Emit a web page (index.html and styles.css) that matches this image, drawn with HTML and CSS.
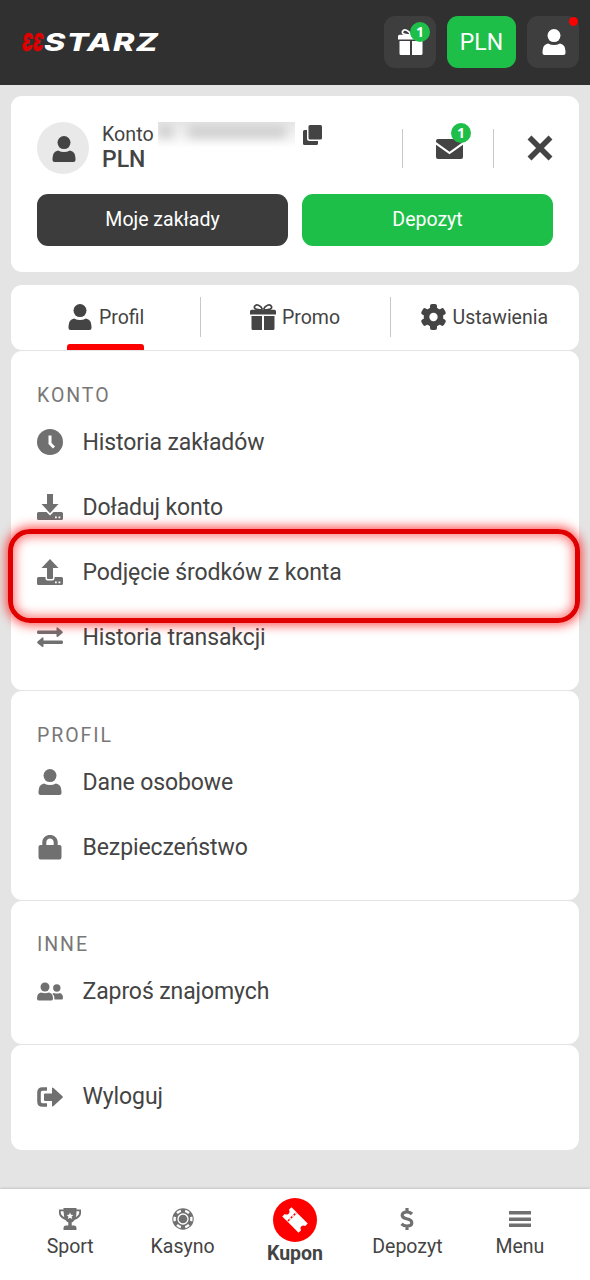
FILE: index.html
```html
<!DOCTYPE html>
<html lang="pl">
<head>
<meta charset="utf-8">
<meta name="viewport" content="width=device-width, initial-scale=1">
<title>Konto</title>
<link rel="stylesheet" href="styles.css">
</head>
<body>
<svg class="defs" aria-hidden="true">
  <symbol id="user" viewBox="0 0 26 26"><circle cx="13" cy="6.6" r="6.5"/><path d="M7 14.400Q10 16 13 16T19 14.400Q24.500 15.500 24.500 22.500V24Q24.500 26 22.500 26H3.500Q1.500 26 1.500 24V22.500Q1.500 15.500 7 14.400Z"/></symbol>
  <symbol id="gift" viewBox="0 0 26 26"><path d="M0 7.500Q0 5.800 1.600 5.800H24.400Q26 5.800 26 7.500V10.500H0ZM1.500 12H12V26H3Q1.500 26 1.500 24.500ZM14 12H24.500V24.500Q24.500 26 23 26H14Z"/><path d="M12.500 6C9 6 3.500 5.500 4.500 2.500C6-.5 11 1 12.500 5.500M13.500 6C17 6 22.500 5.500 21.500 2.500C20-.5 15 1 13.500 5.500" fill="none" stroke="currentColor" stroke-width="1.700"/></symbol>
</svg>

<header class="topbar">
  <svg class="logo" viewBox="0 0 140 24" role="img" aria-label="Starz">
    <text class="logo-mark" x="0" y="20.500" textLength="21.500" lengthAdjust="spacingAndGlyphs">ƐƐ</text>
    <text class="logo-word" x="22" y="20.500" textLength="115" lengthAdjust="spacingAndGlyphs">STARZ</text>
  </svg>
  <div class="topbar-actions">
    <button class="square"><svg class="i26"><use href="#gift"/></svg><span class="badge badge-gift">1</span></button>
    <button class="currency">PLN</button>
    <button class="square"><svg class="i26"><use href="#user"/></svg><span class="dot"></span></button>
  </div>
</header>

<main class="content">
  <section class="card account">
    <div class="account-head">
      <span class="avatar"><svg class="i26"><use href="#user"/></svg></span>
      <div class="account-info">
        <div class="account-line"><span>Konto</span><span class="masked"><span class="smudge s1"></span><span class="smudge s2"></span></span>
          <svg class="copy" viewBox="0 0 19 20"><path d="M1.500 5H4V13.500Q4 16 6.500 16H15V18.500Q15 20 13.500 20H1.500Q0 20 0 18.500V6.500Q0 5 1.500 5Z"/><rect x="5.500" y="0" width="13.500" height="14.500" rx="1.500"/></svg>
        </div>
        <strong class="account-currency">PLN</strong>
      </div>
      <div class="mail">
        <svg class="mail-icon" viewBox="0 0 27 20"><path d="M2 0H25Q27 0 27 2V3L13.500 12.800L0 3V2Q0 0 2 0ZM0 5.800L13.500 15.300L27 5.800V18Q27 20 25 20H2Q0 20 0 18Z"/></svg>
        <span class="badge badge-mail">1</span>
      </div>
      <svg class="close" viewBox="0 0 26 26"><path d="M2.500 2.500L23.500 23.500M23.500 2.500L2.500 23.500"/></svg>
    </div>
    <div class="account-buttons">
      <button class="btn btn-dark">Moje zakłady</button>
      <button class="btn btn-green">Depozyt</button>
    </div>
  </section>

  <nav class="card tabs">
    <a class="tab tab-active"><span class="tab-body"><svg class="i26"><use href="#user"/></svg>Profil</span></a>
    <a class="tab"><span class="tab-body"><svg class="i26"><use href="#gift"/></svg>Promo</span></a>
    <a class="tab"><span class="tab-body"><svg class="i26" viewBox="0.500 0 26 26"><rect x="9.500" y="0" width="7" height="26" rx="2"/><rect x="9.500" y="0" width="7" height="26" rx="2" transform="rotate(60 13 13)"/><rect x="9.500" y="0" width="7" height="26" rx="2" transform="rotate(120 13 13)"/><circle cx="13" cy="13" r="9.800"/><circle class="hole" cx="13" cy="13" r="4.200"/></svg>Ustawienia</span></a>
  </nav>

  <section class="card group">
    <h2 class="group-title">KONTO</h2>
    <a class="row"><svg class="i26" viewBox="0 0 26 26"><circle cx="13" cy="13" r="13"/><path class="clock-hand" d="M13 6.500V14.500L17 18.500"/></svg>Historia zakładów</a>
    <a class="row"><svg class="i26" viewBox="0 0 26 26"><path d="M10 0H16V10H21.500L13 19.200L4.500 10H10Z"/><path d="M1.500 18H9.500L13 21.500L16.500 18H24.500Q26 18 26 19.500V24.500Q26 26 24.500 26H1.500Q0 26 0 24.500V19.500Q0 18 1.500 18Z"/><path class="hole" d="M18 22.500h1.800v1.800H18zM21.500 22.500h1.800v1.800h-1.800z"/></svg>Doładuj konto</a>
    <a class="row row-marked"><svg class="i26" viewBox="0 0 26 26"><path d="M13 0L21.500 9H16V19Q16 20 15 20H11Q10 20 10 19V9H4.500Z"/><path d="M1.500 18H8.500V19.500Q8.500 21.500 10.500 21.500H15.500Q17.500 21.500 17.500 19.500V18H24.500Q26 18 26 19.500V24.500Q26 26 24.500 26H1.500Q0 26 0 24.500V19.500Q0 18 1.500 18Z"/><path class="hole" d="M18 22.500h1.800v1.800H18zM21.500 22.500h1.800v1.800h-1.800z"/></svg>Podjęcie środków z konta</a>
    <a class="row"><svg class="i26" viewBox="0 0 26 26"><path d="M1 6.500H19.500V4.200Q19.500 2.600 21 3.700L25.500 7.400Q26.300 8.200 25.500 9L21 12.700Q19.500 13.500 19.500 12V10H1Q0 10 0 8.300Q0 6.500 1 6.500ZM25 16.500H6.500V14.500Q6.500 12.700 5 13.700L.5 17.500Q-.3 18.400.5 19.200L5 22.800Q6.500 23.600 6.500 22V20H25Q26 20 26 18.300Q26 16.500 25 16.500Z"/></svg>Historia transakcji</a>
  </section>

  <section class="card group group-short">
    <h2 class="group-title">PROFIL</h2>
    <a class="row"><svg class="i26"><use href="#user"/></svg>Dane osobowe</a>
    <a class="row"><svg class="i26" viewBox="0 0 26 26"><path d="M5.300 11V8.500C5.300-1.500 20.700-1.500 20.700 8.500V11H22.500Q24.500 11 24.500 13V23Q24.500 25.500 22.500 25.500H3.500Q1.500 25.500 1.500 23V13Q1.500 11 3.500 11ZM9.300 11H16.700V8.500C16.700 3.300 9.300 3.300 9.300 8.500Z"/></svg>Bezpieczeństwo</a>
  </section>

  <section class="card group group-short">
    <h2 class="group-title">INNE</h2>
    <a class="row"><svg class="i26" viewBox="0 0.500 26 26"><circle cx="8" cy="8.500" r="4.500"/><circle cx="19.800" cy="9.500" r="3.700"/><path d="M4 14Q8 15.500 12 14Q16 14.700 16 20Q16 22 14.500 22H1.500Q0 22 0 20Q0 14.700 4 14ZM16.500 14.500Q20 15.500 23 14.500Q26 15.500 26 19.500Q26 21 24.500 21H17.500Q17.800 17 15.500 15.300Z"/></svg>Zaproś znajomych</a>
  </section>

  <section class="card logout">
    <a class="row"><svg class="i26" viewBox="0 0 26 26"><path d="M10 5H5.500Q2 5 2 8.500V17.500Q2 21 5.500 21H10" fill="none" stroke="currentColor" stroke-width="3.600"/><path d="M8 9.500H15V4.500Q15 2.700 16.500 4L25.500 12.200Q26.300 13 25.500 13.800L16.500 22Q15 23.300 15 21.500V17H8Q7 17 7 16V10.500Q7 9.500 8 9.500Z"/></svg>Wyloguj</a>
  </section>
</main>

<nav class="bottom">
  <a class="item"><svg class="i22" viewBox="0 0 22 22"><path d="M4.500 0H17.500V1.500H22V5C22 8.500 18.500 11 15.500 12Q14 14 12.700 14.500V17.500H15.500Q17.500 17.500 17.500 20V22H4.500V20Q4.500 17.500 6.500 17.500H9.300V14.500Q8 14 6.500 12C3.500 11 0 8.500 0 5V1.500H4.500ZM4.500 3.300H1.800V5Q2 7.500 5.200 9.300ZM17.500 3.300Q17.500 7 16.800 9.300Q20 7.500 20.200 5V3.300Z" fill-rule="evenodd"/><path class="hole" d="M11 4.500l1 2.200 2.400.3-1.800 1.600.6 2.400L11 9.800l-2.200 1.200.6-2.400L7.600 7l2.400-.3z"/></svg><span>Sport</span></a>
  <a class="item"><svg class="i22" viewBox="0 0 22 22"><circle cx="11" cy="11" r="10.700"/><g class="chip-lines"><circle cx="11" cy="11" r="5"/><circle class="chip-dash" cx="11" cy="11" r="8.400" pathLength="48"/></g></svg><span>Kasyno</span></a>
  <a class="item item-active"><span class="coupon"><svg class="coupon-icon" viewBox="0 0 26 26"><g transform="rotate(45 13 13)"><path d="M1.500 6.500H8V19.500H1.500V16Q4 15.500 4 13Q4 10.500 1.500 10ZM9.500 6.500H24.500V10Q22 10.500 22 13Q22 15.500 24.500 16V19.500H9.500Z"/><path class="perf" d="M8.750 6.500V19.500"/></g></svg></span><span>Kupon</span></a>
  <a class="item"><svg class="i22" viewBox="0 0 22 22"><path class="dollar" d="M11 0V4M11 18V22M16 6Q14 4 11 4Q6.200 4 6.200 7.300Q6.200 9.800 10.500 10.700Q15.800 11.700 15.800 14.700Q15.800 18 11 18Q7.700 18 5.500 15.800"/></svg><span>Depozyt</span></a>
  <a class="item"><svg class="i22" viewBox="0 0 22 22"><path d="M0 3h22v3.500H0zM0 9.500h22V13H0zM0 15.500h22V19H0z"/></svg><span>Menu</span></a>
</nav>
</body>
</html>
```

FILE: styles.css
```css
*, *::before, *::after { box-sizing: border-box; }
body { margin: 0; width: 590px; height: 1280px; display: flex; flex-direction: column; overflow: hidden; background: #e4e4e4; color: #444; font-family: Roboto, "Liberation Sans", sans-serif; }
svg { display: block; flex: none; fill: currentColor; overflow: visible; }
button { border: 0; padding: 0; font-family: inherit; color: #fff; }
.defs { position: absolute; width: 0; height: 0; }
.i26 { width: 26px; height: 26px; }
.i22 { width: 22px; height: 22px; }
.hole { fill: #fff; }

.topbar { flex: none; height: 85px; padding: 0 11px 1px 22px; display: flex; align-items: center; justify-content: space-between; background: #303030; }
.logo { width: 140px; height: 24px; }
.logo-mark, .logo-word { font-family: Inter, sans-serif; font-style: italic; font-size: 25px; }
.logo-mark { fill: #e00000; stroke: #e00000; stroke-width: .4; font-weight: 900; }
.logo-word { fill: #fff; font-weight: 800; letter-spacing: 1px; }
.topbar-actions { display: flex; gap: 11px; }
.square { position: relative; width: 52px; height: 52px; border-radius: 11px; background: #3e3e3e; display: grid; place-items: center; padding-left: 1px; }
.currency { width: 69px; height: 52px; border-radius: 11px; background: #1dbf49; font-size: 23px; }
.badge { position: absolute; width: 20px; height: 20px; border-radius: 50%; background: #1dbf49; color: #fff; font: 700 14px/19px "Open Sans", sans-serif; text-align: center; }
.badge-gift { left: 26px; top: 6px; }
.dot { position: absolute; right: 1px; top: 1px; width: 9px; height: 9px; border-radius: 50%; background: red; }

.content { flex: 1; padding: 11px 11px 0; display: flex; flex-direction: column; gap: 1px; }
.card { flex: none; background: #fff; border-radius: 11px; }

.account { height: 175.500px; padding: 26px; margin-bottom: 12.500px; }
.account-head { display: flex; align-items: center; height: 52px; }
.avatar { width: 52px; height: 52px; border-radius: 50%; background: #e9e9e9; display: grid; place-items: center; padding: 2px 0 0 1px; }
.account-info { width: 300px; padding: 0 0 2px 13px; }
.account-line { display: flex; align-items: center; height: 25px; font-size: 19.700px; }
.masked { position: relative; width: 137px; height: 26px; margin: 0 8px 0 4px; overflow: hidden; background: linear-gradient(#e6e6e6, #fff); }
.smudge { position: absolute; top: 3px; height: 13px; background: #d0d0d0; filter: blur(5px); }
.s1 { left: 0; width: 15px; }
.s2 { left: 30px; width: 98px; }
.copy { width: 19px; height: 20px; }
.account-currency { display: block; font-size: 23px; line-height: 25px; font-weight: 500; }
.mail { position: relative; width: 92px; height: 39px; margin-left: 13px; border: solid #c8c8c8; border-width: 0 1px; padding: 10px 0 0 33px; }
.mail-icon { width: 27px; height: 20px; }
.badge-mail { left: 48px; top: -6px; }
.close { width: 26px; height: 26px; margin-left: auto; fill: none; stroke: #444; stroke-width: 5.500; }
.account-buttons { display: flex; gap: 14px; margin-top: 19.500px; }
.btn { flex: 1; height: 52px; border-radius: 11px; font-size: 19.500px; }
.btn-dark { background: #3c3c3c; }
.btn-green { background: #1dbf49; }

.tabs { height: 65px; display: flex; }
.tab { flex: 1; display: flex; justify-content: center; position: relative; font-size: 19.500px; }
.tab + .tab::before { content: ""; position: absolute; left: 0; top: 12px; width: 1px; height: 40px; background: #c8c8c8; }
.tab-body { display: flex; align-items: center; gap: 6px; position: relative; height: 64px; }
.tab-active .tab-body::after { content: ""; position: absolute; left: 0; right: 0; bottom: -1px; height: 6px; border-radius: 3px 3px 0 0; background: red; }

.group { padding: 32px 26px 20.500px; }
.group-title { margin: 0 0 .5px; font-size: 19.500px; line-height: 26px; font-weight: 400; letter-spacing: 1.950px; color: #777; }
.group-short { padding: 31.500px 26px 20px; }
.group-short .group-title { margin-bottom: 1px; }
.row { position: relative; height: 65px; display: flex; align-items: center; gap: 19.500px; font-size: 23px; letter-spacing: -.1px; }
.row .i26 { color: #707070; }
.clock-hand { fill: none; stroke: #fff; stroke-width: 3; }
.row-marked::after { content: ""; position: absolute; left: -29px; right: -27px; top: -11px; height: 94px; border: 5px solid #e00000; border-radius: 22px; box-shadow: 0 0 11px 2px rgba(255, 0, 0, .7), inset 0 0 11px 2px rgba(255, 0, 0, .55); z-index: 1; }
.logout { padding: 19px 26px 20.500px; }

.bottom { flex: none; height: 91px; padding: 0 14px; display: flex; background: #fff; box-shadow: 0 0 3px rgba(0, 0, 0, .25); }
.item { flex: 1; display: flex; flex-direction: column; align-items: center; padding-top: 19px; font-size: 19.500px; line-height: 24px; }
.item .i22 { color: #707070; margin-bottom: 5px; }
.item-active { padding-top: 9px; font-weight: 700; line-height: 23px; }
.coupon { width: 44px; height: 44px; border-radius: 50%; background: red; color: #fff; display: grid; place-items: center; }
.coupon-icon { width: 26px; height: 26px; }
.perf { fill: none; stroke: #fff; stroke-width: 1.500; stroke-dasharray: 2 2; }
.chip-lines { fill: none; stroke: #fff; stroke-width: 1.300; }
.chip-dash { stroke-width: 2.400; stroke-dasharray: 4 4; stroke-dashoffset: 2; }
.dollar { fill: none; stroke: currentColor; stroke-width: 3.200; }
```
